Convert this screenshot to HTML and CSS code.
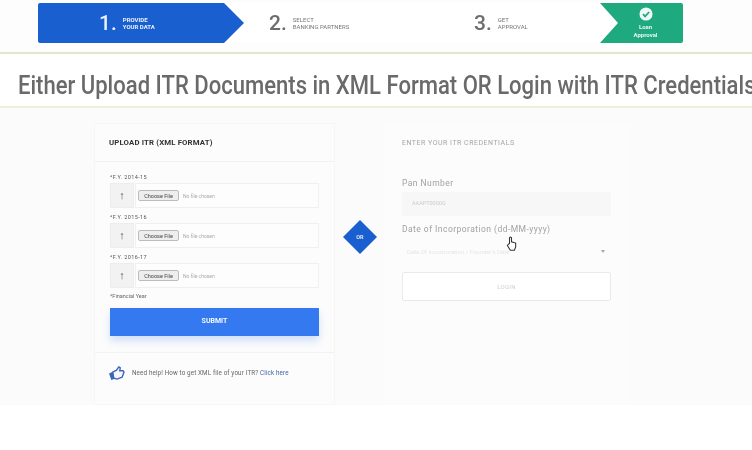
FILE: index.html
```html
<!DOCTYPE html>
<html lang="en">
<head>
<meta charset="utf-8">
<title>Upload ITR</title>
<link rel="stylesheet" href="styles.css">
</head>
<body>
<div class="page">
  <header class="stepper-wrap">
    <nav class="stepper">
      <div class="step step-active"><span class="num">1.</span><span class="lbl">PROVIDE<br>YOUR DATA</span></div>
      <div class="step step-two"><span class="num">2.</span><span class="lbl">SELECT<br>BANKING PARTNERS</span></div>
      <div class="step step-three"><span class="num">3.</span><span class="lbl">GET<br>APPROVAL</span></div>
      <div class="step step-done">
        <svg class="check" viewBox="0 0 16 16" width="14" height="14"><circle cx="8" cy="8" r="7.500" fill="#eef8f4"/><path d="M4.500 8.200l2.500 2.500 4.600-5" fill="none" stroke="#1fa97f" stroke-width="2"/></svg>
        <span class="done-lbl">Loan<br>Approval</span>
      </div>
    </nav>
  </header>
  <h1 class="title"><span class="title-text">Either Upload ITR Documents in XML Format OR Login with ITR Credentials</span></h1>
  <main class="content">
    <section class="card upload">
      <h2 class="card-head">UPLOAD ITR (XML FORMAT)</h2>
      <div class="card-body">
        <div class="fy">*F.Y. 2014-15</div>
        <div class="file-row"><span class="file-icon">&#8593;</span><span class="file-box"><span class="file-btn">Choose File</span><span class="file-none">No file chosen</span></span></div>
        <div class="fy">*F.Y. 2015-16</div>
        <div class="file-row"><span class="file-icon">&#8593;</span><span class="file-box"><span class="file-btn">Choose File</span><span class="file-none">No file chosen</span></span></div>
        <div class="fy">*F.Y. 2016-17</div>
        <div class="file-row"><span class="file-icon">&#8593;</span><span class="file-box"><span class="file-btn">Choose File</span><span class="file-none">No file chosen</span></span></div>
        <div class="fin">*Financial Year</div>
        <div class="submit">SUBMIT</div>
      </div>
      <div class="help">
        <svg class="thumb" viewBox="0 0 18 16" width="17" height="15"><path d="M5 6.500L9 4.500l2.500-3.500 1.500 1-.5 3h3.500l1 1.500-2 5.500-5.500 2-3.500-1z" fill="#f4f7fd" stroke="#3d66b8" stroke-width="1.500"/><path d="M1 8l4-2 2 7.500-3.500 1.500z" fill="#3d66b8"/></svg>
        <span>Need help! How to get XML file of your ITR? <em class="link">Click here</em></span>
      </div>
    </section>
    <div class="or-col"><div class="or"><span>OR</span></div></div>
    <section class="card creds">
      <h2 class="creds-head">ENTER YOUR ITR CREDENTIALS</h2>
      <label class="field-lbl">Pan Number</label>
      <div class="pan">AAAPT0000G</div>
      <label class="field-lbl dob">Date of Incorporation (dd-MM-yyyy)</label>
      <div class="date">Date Of Incorporation / Founder's Date<span class="caret"></span></div>
      <div class="login">LOGIN</div>
      <svg class="cursor" viewBox="0 0 14 18" width="12" height="15"><path d="M4 9V2.500a1.200 1.200 0 0 1 2.400 0V7l5 1.500V13l-1.500 4H5L1.500 11.500 2.500 10z" fill="#fff" stroke="#333" stroke-width="1.300"/></svg>
    </section>
  </main>
</div>
</body>
</html>
```

FILE: styles.css
```css
* { box-sizing: border-box; }
html, body { margin: 0; background: #fff; }
body { width: 752px; height: 450px; overflow: hidden; font-family: Roboto, "Liberation Sans", sans-serif; }
.page { display: flex; flex-direction: column; width: 752px; }

.stepper-wrap { height: 54px; padding: 3px 0 0 38px; border-bottom: 2px solid #e2e6cc; background: #fdfdfd; }
.stepper { display: flex; width: 645px; height: 40px; background: #fff; }
.step { display: flex; align-items: center; gap: 6px; height: 40px; filter: blur(.6px); }
.num { font-size: 21px; line-height: 1; font-weight: 500; color: #6d6d6d; }
.lbl { font-size: 6px; line-height: 7.500px; color: #777; }
.step-active { width: 206px; padding-left: 61px; background: #1a5fd0; border-radius: 2px 0 0 2px; clip-path: polygon(0 0, 186px 0, 100% 50%, 186px 100%, 0 100%); }
.step-active .num, .step-active .lbl { color: #e9f0fc; }
.step-active .lbl { font-weight: 700; }
.step-two { width: 176px; padding-left: 25px; }
.step-three { width: 180px; padding-left: 54px; }
.step-done { width: 83px; flex-direction: column; justify-content: center; gap: 2px; background: #1fa97f; border-radius: 0 2px 2px 0; clip-path: polygon(0 0, 100% 0, 100% 100%, 0 100%, 18px 50%); padding-left: 8px; }
.done-lbl { font-size: 6px; line-height: 8px; font-weight: 700; text-align: center; color: #e6f6f0; }
.check { flex: none; }

.title { margin: 0; height: 54px; padding: 15px 0 0 18px; font-size: 25.500px; line-height: 32px; font-weight: 500; white-space: nowrap; color: #6a6a6a; border-bottom: 2px solid #eef0dc; filter: blur(.6px); }
.title-text { display: inline-block; transform: scaleX(.865); transform-origin: 0 50%; }

.content { display: flex; height: 297px; padding: 15px 0 0 94px; background: #fbfbfb; }
.card { height: 282px; background: #fcfcfc; }
.upload { display: flex; flex-direction: column; width: 241px; border: 1px solid #f6f6f6; filter: blur(.55px); }
.card-head { margin: 0; height: 38px; padding: 14px 0 0 14px; font-size: 7.800px; line-height: 10px; font-weight: 700; letter-spacing: .15px; color: #333; border-bottom: 1px solid #f1f1f1; }
.card-body { height: 191px; padding: 11px 15px 0 15px; border-bottom: 1px solid #f2f2f2; }
.fy { height: 10px; font-size: 5.500px; line-height: 9px; letter-spacing: .4px; color: #555; }
.file-row { display: flex; height: 25px; margin-bottom: 5px; }
.file-icon { width: 24px; font-size: 11px; line-height: 24px; font-weight: 700; text-align: center; color: #555; background: #f2f2f2; border: 1px solid #ededed; }
.file-box { display: flex; flex: 1; align-items: center; padding-left: 2px; margin-left: 1px; background: #fdfdfd; border: 1px solid #f0f0f0; }
.file-btn { width: 41px; height: 11px; font-size: 5.500px; line-height: 10px; text-align: center; color: #444; background: #eee; border: 1px solid #bbb; border-radius: 2px; }
.file-none { margin-left: 4px; font-size: 5px; color: #aaa; }
.fin { height: 11px; margin-top: -1px; font-size: 5.500px; line-height: 8px; color: #666; }
.submit { height: 28px; margin-top: 5px; font-size: 7px; line-height: 27px; font-weight: 700; text-align: center; color: #f4f8ff; background: #3579f0; box-shadow: 0 5px 8px rgba(53,121,240,.22); }
.help { display: flex; align-items: center; gap: 7px; height: 50px; padding: 0 0 10px 13px; font-size: 6.300px; letter-spacing: .12px; color: #666; }
.thumb { flex: none; }
.link { font-style: normal; color: #3d5fa8; }

.or-col { width: 50px; padding: 97px 0 0 8px; }
.or { display: flex; align-items: center; justify-content: center; width: 34px; height: 34px; background: #1a5fd0; clip-path: polygon(50% 0, 100% 50%, 50% 100%, 0 50%); font-size: 5.500px; font-weight: 700; color: #dce8fb; filter: blur(.4px); }

.creds { position: relative; width: 245px; padding: 16px 19px 0 17px; background: #fcfcfc; }
.creds-head { margin: 0; height: 39px; font-size: 7px; line-height: 9px; font-weight: 400; letter-spacing: .5px; color: #a5a5a5; filter: blur(.6px); }
.field-lbl { display: block; font-size: 8.500px; line-height: 11px; letter-spacing: .45px; color: #a2a2a2; filter: blur(.6px); }
.pan { height: 24px; margin-top: 3px; padding-left: 10px; font-size: 5.500px; line-height: 22px; color: #ccc; background: #f7f7f7; filter: blur(.6px); }
.dob { margin-top: 8px; }
.date { display: flex; align-items: center; justify-content: space-between; height: 26px; margin-top: 3px; padding: 0 6px 0 5px; font-size: 6px; color: #e6e6e6; filter: blur(.6px); }
.caret { width: 0; height: 0; border: 2.500px solid transparent; border-top: 3px solid #aaa; border-bottom: 0; }
.login { height: 29px; margin-top: 8px; font-size: 6px; line-height: 27px; letter-spacing: .3px; text-align: center; color: #cfcfcf; background: #fff; border: 1px solid #eaeaea; border-radius: 2px; filter: blur(.4px); }
.cursor { position: absolute; left: 121px; top: 113px; filter: blur(.3px); }
```
